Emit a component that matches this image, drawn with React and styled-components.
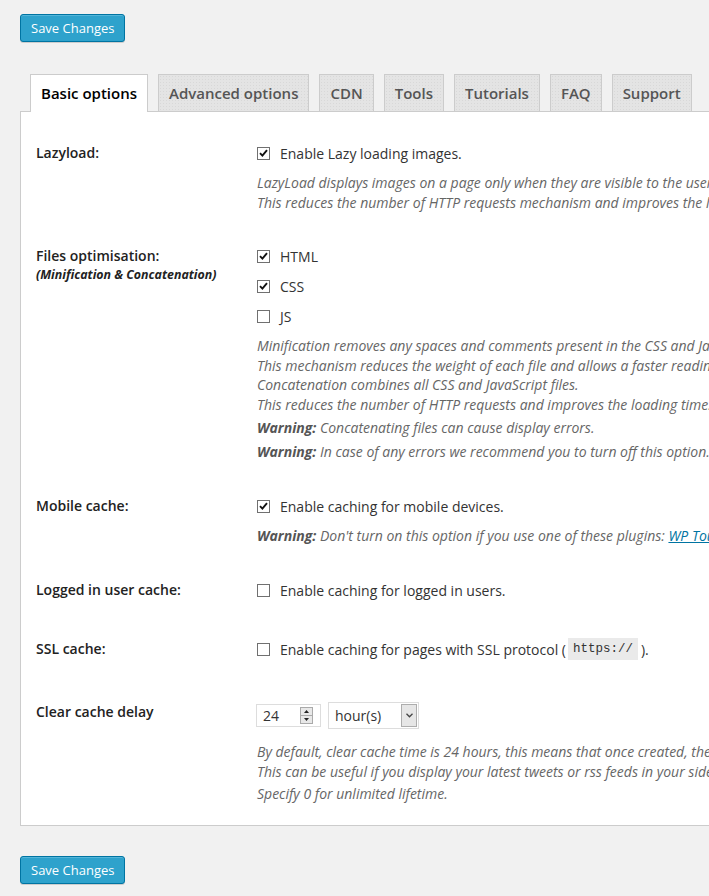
import React from 'react';
import styled, { createGlobalStyle } from 'styled-components';

const GlobalStyle = createGlobalStyle`
  html, body {
    margin: 0;
    padding: 0;
    background: #f1f1f1;
    overflow: hidden;
  }
  body {
    font-family: 'Open Sans', 'Liberation Sans', sans-serif;
    font-size: 14px;
    color: #444;
  }
`;

const Page = styled.div`
  width: 709px;
  height: 896px;
  overflow: hidden;
  padding: 14px 0 0 20px;
  box-sizing: border-box;
`;

const PrimaryButton = styled.button`
  display: block;
  height: 28px;
  margin: ${(p) => p.$mt || 0}px 0 0;
  padding: 0 10px;
  font-family: 'Open Sans', 'Liberation Sans', sans-serif;
  font-size: 13px;
  line-height: 26px;
  color: #fff;
  background: #2ea2cc;
  border: 1px solid #0074a2;
  border-radius: 3px;
  box-shadow: inset 0 1px 0 rgba(120, 200, 230, 0.5),
    0 1px 0 rgba(0, 0, 0, 0.15);
  cursor: pointer;
`;

const TabBar = styled.nav`
  display: flex;
  align-items: flex-end;
  gap: 10px;
  margin-top: 32px;
  padding-left: 10px;
`;

const Tab = styled.a`
  display: block;
  position: relative;
  z-index: 1;
  padding: 6px 10px ${(p) => (p.$active ? 7 : 6)}px;
  margin-bottom: ${(p) => (p.$active ? -1 : 0)}px;
  font-size: 15px;
  font-weight: 600;
  line-height: 24px;
  white-space: nowrap;
  color: ${(p) => (p.$active ? '#000' : '#555')};
  border: 1px solid #ccc;
  border-bottom: none;
  background-color: ${(p) => (p.$active ? '#fff' : '#e4e4e4')};
  background-image: ${(p) =>
    p.$active
      ? 'none'
      : 'radial-gradient(rgba(0,0,0,0.05) 0.6px, transparent 0.8px)'};
  background-size: 3px 3px;
`;

const Panel = styled.section`
  width: 1000px;
  padding: 14px 0 4px;
  background: #fff;
  border: 1px solid #ccc;
`;

const Row = styled.div`
  display: grid;
  grid-template-columns: 221px 1fr;
  padding: ${(p) => p.$pt || 17}px 0 17px 15px;
`;

const Label = styled.div`
  font-weight: 600;
  font-size: 14px;
  line-height: 20px;
  color: #222;
`;

const SubLabel = styled.div`
  font-size: 12.4px;
  font-style: italic;
  font-weight: 700;
  line-height: 18px;
  color: #222;
`;

const Field = styled.div`
  display: flex;
  flex-direction: column;
  white-space: nowrap;
`;

const CheckList = styled.div`
  display: flex;
  flex-direction: column;
  gap: 10px;
`;

const CheckLine = styled.label`
  display: flex;
  align-items: center;
  height: 20px;
  color: #333;
  font-size: 14px;
`;

const Box = styled.span`
  display: inline-flex;
  align-items: center;
  justify-content: center;
  width: 13px;
  height: 13px;
  box-sizing: border-box;
  margin-right: 10px;
  border: 1px solid #707070;
  background: #fff;
`;

const Description = styled.p`
  margin: ${(p) => p.$mt || 0}px 0 0;
  font-style: italic;
  font-size: 14px;
  line-height: ${(p) => p.$lh || 19.5}px;
  color: #666;
`;

const Strong = styled.strong`
  font-weight: 700;
  color: #555;
`;

const Link = styled.a`
  color: #0074a2;
  text-decoration: underline;
`;

const Code = styled.code`
  margin: 0 3px 0 2px;
  padding: 3px 5px;
  font-family: 'Liberation Mono', 'DejaVu Sans Mono', monospace;
  font-size: 12.5px;
  line-height: 16px;
  color: #333;
  background: #eaeaea;
`;

const Controls = styled.div`
  display: flex;
  align-items: center;
  gap: 7px;
  height: 27px;
`;

const NumberBox = styled.div`
  display: flex;
  align-items: center;
  justify-content: space-between;
  width: 65px;
  height: 23px;
  margin-left: -1px;
  box-sizing: border-box;
  padding: 0 7px 0 6px;
  border: 1px solid #ddd;
  background: #fff;
  color: #333;
`;

const Spinner = styled.div`
  display: flex;
  flex-direction: column;
  width: 13px;
  height: 17px;
  box-sizing: border-box;
  border: 1px solid #aaa;
  background: #e8e8e8;

  span {
    flex: 1;
    display: flex;
    align-items: center;
    justify-content: center;
  }
  span + span {
    border-top: 1px solid #aaa;
  }
`;

const Select = styled.div`
  display: flex;
  align-items: center;
  justify-content: space-between;
  width: 91px;
  height: 27px;
  box-sizing: border-box;
  padding: 1px 1px 1px 6px;
  border: 1px solid #ddd;
  background: #fff;
  color: #333;
`;

const SelectArrow = styled.span`
  display: flex;
  align-items: center;
  justify-content: center;
  width: 16px;
  height: 23px;
  box-sizing: border-box;
  border: 1px solid #adadad;
  background: #e6e6e6;
`;

const Check = ({ checked, children }) => (
  <CheckLine>
    <Box>
      {checked && (
        <svg width='9' height='8' viewBox='0 0 9 8'>
          <path d='M1 4.2 L3.4 6.6 L8 1.2' fill='none' stroke='#111' strokeWidth='1.9' />
        </svg>
      )}
    </Box>
    {children}
  </CheckLine>
);

const tabs = ['Basic options', 'Advanced options', 'CDN', 'Tools', 'Tutorials', 'FAQ', 'Support'];

const App = () => {
  return (
    <Page>
      <GlobalStyle />
      <PrimaryButton>Save Changes</PrimaryButton>

      <TabBar>
        {tabs.map((t, i) => (
          <Tab key={t} $active={i === 0}>
            {t}
          </Tab>
        ))}
      </TabBar>

      <Panel>
        <Row>
          <Label>Lazyload:</Label>
          <Field>
            <Check checked>Enable Lazy loading images.</Check>
            <Description $mt={10}>
              LazyLoad displays images on a page only when they are visible to the user.
              <br />
              This reduces the number of HTTP requests mechanism and improves the loading time.
            </Description>
          </Field>
        </Row>

        <Row>
          <div>
            <Label>Files optimisation:</Label>
            <SubLabel>(Minification &amp; Concatenation)</SubLabel>
          </div>
          <Field>
            <CheckList>
              <Check checked>HTML</Check>
              <Check checked>CSS</Check>
              <Check>JS</Check>
            </CheckList>
            <Description $mt={10}>
              Minification removes any spaces and comments present in the CSS and JavaScript files.
              <br />
              This mechanism reduces the weight of each file and allows a faster reading of browsers and search engines.
              <br />
              Concatenation combines all CSS and JavaScript files.
              <br />
              This reduces the number of HTTP requests and improves the loading time.
            </Description>
            <Description $mt={4} $lh={20}>
              <Strong>Warning:</Strong> Concatenating files can cause display errors.
            </Description>
            <Description $mt={4} $lh={20}>
              <Strong>Warning:</Strong> In case of any errors we recommend you to turn off this option.
            </Description>
          </Field>
        </Row>

        <Row>
          <Label>Mobile cache:</Label>
          <Field>
            <Check checked>Enable caching for mobile devices.</Check>
            <Description $mt={10} $lh={20}>
              <Strong>Warning:</Strong> Don't turn on this option if you use one of these plugins:{' '}
              <Link href='#'>WP Touch</Link>, <Link href='#'>WP Mobile Detector</Link>
            </Description>
          </Field>
        </Row>

        <Row>
          <Label>Logged in user cache:</Label>
          <Field>
            <Check>Enable caching for logged in users.</Check>
          </Field>
        </Row>

        <Row $pt={22}>
          <Label>SSL cache:</Label>
          <Field>
            <Check>
              Enable caching for pages with SSL protocol (<Code>https://</Code>).
            </Check>
          </Field>
        </Row>

        <Row $pt={26}>
          <Label>Clear cache delay</Label>
          <Field>
            <Controls>
              <NumberBox>
                24
                <Spinner>
                  <span>
                    <svg width='5' height='3' viewBox='0 0 5 3'>
                      <path d='M0 3 L2.5 0 L5 3 Z' fill='#222' />
                    </svg>
                  </span>
                  <span>
                    <svg width='5' height='3' viewBox='0 0 5 3'>
                      <path d='M0 0 L2.5 3 L5 0 Z' fill='#222' />
                    </svg>
                  </span>
                </Spinner>
              </NumberBox>
              <Select>
                hour(s)
                <SelectArrow>
                  <svg width='7' height='5' viewBox='0 0 7 5'>
                    <path d='M0.5 0.8 L3.5 3.8 L6.5 0.8' fill='none' stroke='#444' strokeWidth='1.3' />
                  </svg>
                </SelectArrow>
              </Select>
            </Controls>
            <Description $mt={13}>
              By default, clear cache time is 24 hours, this means that once created, the cache files are automatically removed after 24 hours.
              <br />
              This can be useful if you display your latest tweets or rss feeds in your sidebar, for example.
            </Description>
            <Description $mt={3} $lh={20}>
              Specify 0 for unlimited lifetime.
            </Description>
          </Field>
        </Row>
      </Panel>

      <PrimaryButton $mt={30}>Save Changes</PrimaryButton>
    </Page>
  );
};

export default App;
